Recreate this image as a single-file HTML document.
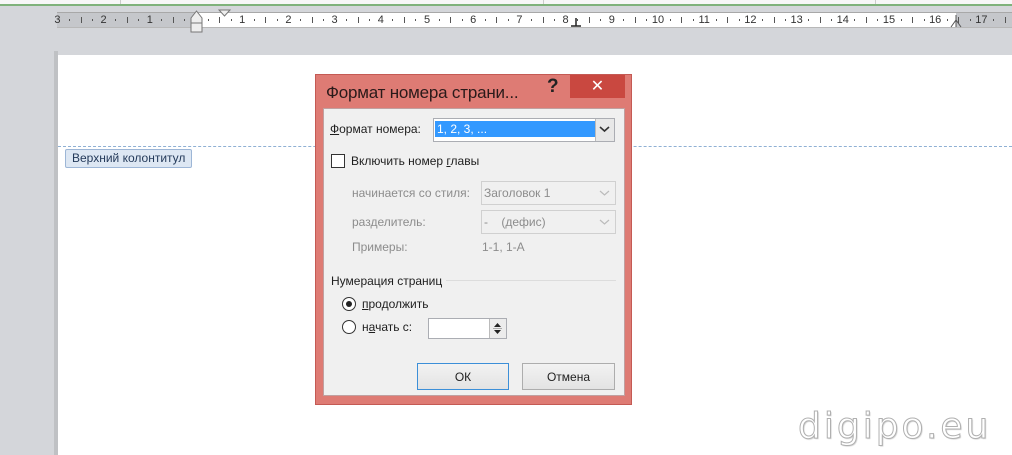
<!DOCTYPE html>
<html><head><meta charset="utf-8"><style>
*{margin:0;padding:0;box-sizing:border-box}
body{width:1012px;height:455px;overflow:hidden;background:#d4d6da;font-family:"Liberation Sans","DejaVu Sans",sans-serif;position:relative}
.a{position:absolute}
.t{font-size:12px;color:#1e1e1e;white-space:nowrap}
.g{color:#8c8c8c}
.combo{background:#fff;border:1px solid #abadb3}
.dis{background:#f0f0f0;border:1px solid #d0d0d0}
.btn{background:linear-gradient(#f2f2f2,#e3e3e3);border:1px solid #adadad;font-size:12px;text-align:center;line-height:27px;color:#222}
</style></head><body>
<div class="a" style="left:0;top:0;width:1012px;height:4px;background:#f7f7f7"></div>
<div class="a" style="left:0;top:4px;width:1012px;height:2px;background:#7fb27b"></div>
<div class="a" style="left:120px;top:0;width:1px;height:4px;background:#ccc"></div>
<div class="a" style="left:543px;top:0;width:1px;height:4px;background:#ccc"></div>
<div class="a" style="left:875px;top:0;width:1px;height:4px;background:#ccc"></div>
<!-- ruler -->
<div class="a" style="left:57px;top:12px;width:955px;height:16px;background:#c5c7cb;border-top:1px solid #a8a8a8;border-bottom:1px solid #b8b8b8"></div>
<div class="a" style="left:197px;top:13px;width:759px;height:14px;background:#fff"></div>
<div id="r"></div>
<svg class="a" style="left:190px;top:10px" width="14" height="24"><path d="M6.5 1 L12 8 V13 H1 V8 Z M1 13 H12 V22 H1 Z" fill="#eee" stroke="#777"/></svg>
<svg class="a" style="left:218px;top:9px" width="14" height="10"><path d="M1 1 H12 L6.5 7 Z" fill="#eee" stroke="#777"/></svg>
<svg class="a" style="left:570px;top:16px" width="12" height="12"><path d="M6 2 V10 M1 10 H11" stroke="#222" stroke-width="1.5"/></svg>
<svg class="a" style="left:950px;top:14px" width="14" height="14"><path d="M6 1 V13 M1 13 L6 6 L11 13" stroke="#555" fill="none"/></svg>
<!-- page -->
<div class="a" style="left:54px;top:51px;width:4px;height:404px;background:#bfc1c4"></div>
<div class="a" style="left:58px;top:55px;width:954px;height:400px;background:#fff"></div>
<div class="a" style="left:58px;top:146px;width:954px;border-top:1px dashed #8fb0d4"></div>
<div class="a t" style="left:65px;top:149px;width:127px;height:19px;background:#dde7f3;border:1px solid #9db6d6;border-radius:2px;color:#243a5a;font-size:12px;line-height:17px;padding-left:6px">Верхний колонтитул</div>
<div class="a" style="left:798px;top:406px;font-size:36px;letter-spacing:3px;color:#fff;-webkit-text-stroke:1px #b0b0b0;font-family:'DejaVu Sans',sans-serif;text-shadow:1px 1px 1px #ccc">digipo.eu</div>
<!-- dialog -->
<div class="a" style="left:315px;top:74px;width:317px;height:331px;background:#de7b74;border:1px solid #c45a54"></div>
<div class="a" style="left:570px;top:75px;width:55px;height:23px;background:#c94840;color:#fff;font-size:16px;font-weight:bold;text-align:center;line-height:23px">✕</div>
<div class="a" style="left:547px;top:76px;font-size:19px;font-weight:bold;color:#222">?</div>
<div class="a" style="left:326px;top:83px;font-size:17px;letter-spacing:-0.2px;color:#2a1a1a">Формат номера страни...</div>
<div class="a" style="left:323px;top:108px;width:302px;height:288px;background:#f0f0f0;border:1px solid #c0a0a0"></div>
<div class="a t" style="left:330px;top:122px"><u>Ф</u>ормат номера:</div>
<div class="a combo" style="left:433px;top:118px;width:182px;height:24px"></div>
<div class="a" style="left:435px;top:121px;width:160px;height:16px;background:#3399ff;color:#fff;font-size:12px;line-height:16px;padding-left:2px">1, 2, 3, ...</div>
<div class="a" style="left:595px;top:119px;width:19px;height:22px;background:#e8e8e8;border-left:1px solid #bbb"></div>
<svg class="a" style="left:599px;top:125px" width="11" height="8"><path d="M1 2 L5.5 6 L10 2" stroke="#333" stroke-width="1.6" fill="none"/></svg>
<div class="a" style="left:331px;top:154px;width:14px;height:14px;background:#fff;border:1px solid #333"></div>
<div class="a t" style="left:351px;top:154px">Включить номер <u>г</u>лавы</div>
<div class="a t g" style="left:352px;top:186px">начинается со стиля:</div>
<div class="a dis" style="left:481px;top:181px;width:135px;height:24px"></div>
<div class="a t g" style="left:484px;top:186px">Заголовок 1</div>
<svg class="a" style="left:599px;top:189px" width="11" height="8"><path d="M1 2 L5.5 6 L10 2" stroke="#bbb" stroke-width="1.2" fill="none"/></svg>
<div class="a t g" style="left:352px;top:215px">разделитель:</div>
<div class="a dis" style="left:481px;top:210px;width:135px;height:24px"></div>
<div class="a t g" style="left:484px;top:215px">-&nbsp;&nbsp;&nbsp;&nbsp;(дефис)</div>
<svg class="a" style="left:599px;top:218px" width="11" height="8"><path d="M1 2 L5.5 6 L10 2" stroke="#bbb" stroke-width="1.2" fill="none"/></svg>
<div class="a t g" style="left:352px;top:240px">Примеры:</div>
<div class="a t g" style="left:482px;top:240px">1-1, 1-А</div>
<div class="a t" style="left:331px;top:274px">Нумерация страниц</div>
<div class="a" style="left:446px;top:280px;width:170px;border-top:1px solid #dcdcdc"></div>
<div class="a" style="left:342px;top:297px;width:14px;height:14px;border-radius:50%;background:#fff;border:1px solid #333"></div>
<div class="a" style="left:346px;top:301px;width:6px;height:6px;border-radius:50%;background:#222"></div>
<div class="a t" style="left:362px;top:297px"><u>п</u>родолжить</div>
<div class="a" style="left:342px;top:320px;width:14px;height:14px;border-radius:50%;background:#fff;border:1px solid #333"></div>
<div class="a t" style="left:362px;top:320px">н<u>а</u>чать с:</div>
<div class="a combo" style="left:428px;top:318px;width:79px;height:21px"></div>
<div class="a" style="left:489px;top:319px;width:17px;height:19px;background:#ececec;border-left:1px solid #bbb"></div>
<svg class="a" style="left:492px;top:320px" width="11" height="17"><path d="M2 7 L5.5 3 L9 7 Z M2 10 L5.5 14 L9 10 Z" fill="#222"/><path d="M1 8.5 H10" stroke="#aaa"/></svg>
<div class="a btn" style="left:417px;top:363px;width:92px;height:27px;border-color:#3c8fd8">ОК</div>
<div class="a btn" style="left:522px;top:363px;width:93px;height:27px">Отмена</div>
<script>
var r=document.getElementById('r'),h='';
for(var n=-3;n<=17;n++){var x=196+46.2*n;
 if(n!==0)h+='<div class="a" style="left:'+(x-8)+'px;top:13px;width:16px;text-align:center;font-size:11px;color:#333;line-height:14px">'+Math.abs(n)+'</div>';
 for(var k=1;k<4;k++){var xx=x+k*11.55;if(xx>1012||xx<57)continue;
  if(k==2)h+='<div class="a" style="left:'+xx+'px;top:17px;width:1px;height:6px;background:#555"></div>';
  else h+='<div class="a" style="left:'+xx+'px;top:19px;width:1px;height:2px;background:#555"></div>';}
}
r.innerHTML=h;
</script>
</body></html>
